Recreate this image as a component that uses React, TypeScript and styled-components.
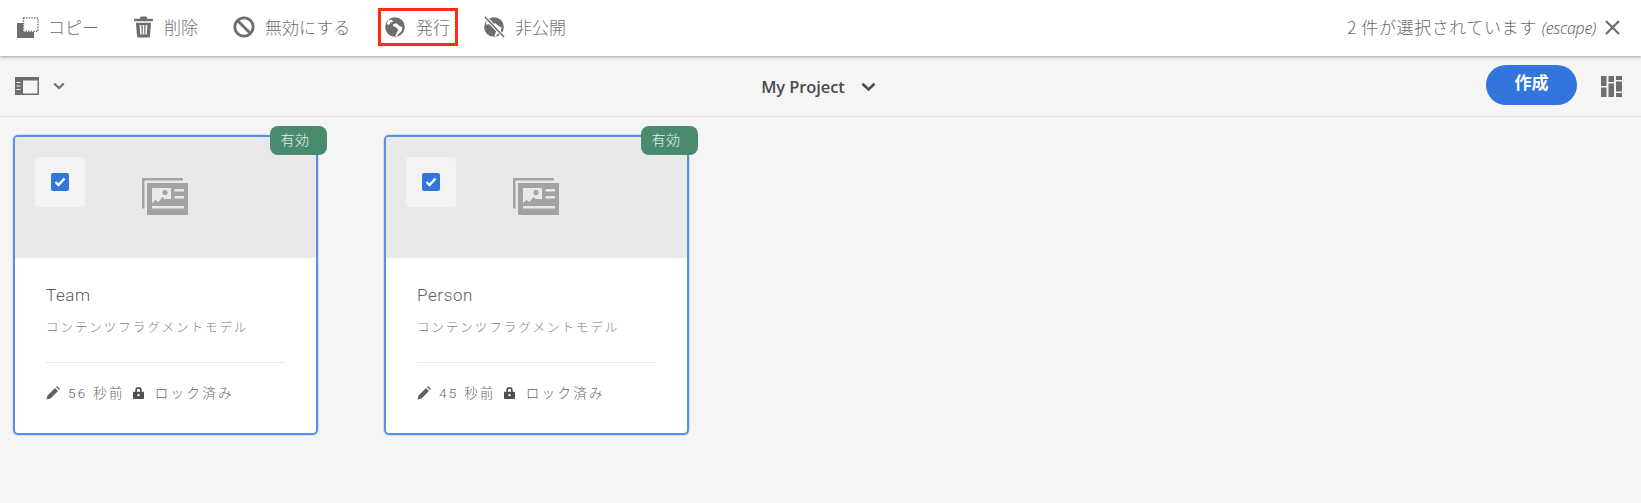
import React from "react";
import styled, { createGlobalStyle } from "styled-components";

const Global = createGlobalStyle`
  html, body { margin: 0; padding: 0; background: #f5f5f5; }
  #root { height: 503px; overflow: hidden; }
  body { font-family: "Noto Sans CJK JP", "Noto Sans", sans-serif; }
`;

const Page = styled.div`
  width: 1641px;
  height: 503px;
  display: flex;
  flex-direction: column;
  background: #f5f5f5;
`;

const ActionBar = styled.header`
  height: 56px;
  flex: none;
  box-sizing: border-box;
  background: #fff;
  box-shadow: 0 1px 3px rgba(0, 0, 0, 0.35);
  display: flex;
  align-items: center;
  justify-content: space-between;
  padding: 0 21px 0 17px;
  position: relative;
`;

const Actions = styled.div`
  display: flex;
  align-items: center;
`;

const Action = styled.div<{ $w: number; $gap: number; $after?: number; $boxed?: boolean }>`
  display: flex;
  align-items: center;
  box-sizing: border-box;
  width: ${(p) => p.$w}px;
  height: 38px;
  gap: ${(p) => p.$gap}px;
  margin-right: ${(p) => p.$after ?? 0}px;
  padding-left: ${(p) => (p.$boxed ? 4 : 0)}px;
  border: ${(p) => (p.$boxed ? "3px solid #ff2a12" : "none")};
  font-size: 17px;
  font-weight: 300;
  color: #707070;
  margin-top: -2px;
  white-space: nowrap;
`;

const ActionLabel = styled.span`
  position: relative;
  top: -1px;
`;

const Status = styled.div`
  display: flex;
  align-items: center;
  gap: 9px;
  font-size: 17px;
  font-weight: 300;
  color: #686868;
  margin-top: -2px;
`;

const StatusText = styled.span`
  position: relative;
  top: -1px;
  letter-spacing: 0.6px;
`;

const Esc = styled.em`
  font-family: "Noto Sans", sans-serif;
  font-size: 16px;
  margin-left: 5px;
  letter-spacing: -0.3px;
`;

const SubBar = styled.div`
  height: 61px;
  flex: none;
  box-sizing: border-box;
  border-bottom: 1px solid #e1e1e1;
  display: grid;
  grid-template-columns: 1fr auto 1fr;
  align-items: center;
  padding: 0 19px 0 15px;
`;

const RailToggle = styled.div`
  display: flex;
  align-items: center;
  gap: 14px;
`;

const Title = styled.div`
  display: flex;
  align-items: center;
  gap: 16px;
  font-family: "Open Sans", sans-serif;
  font-size: 16.5px;
  font-weight: 600;
  letter-spacing: -0.1px;
  color: #4b4b4b;
  padding-top: 1px;
`;

const RightTools = styled.div`
  display: flex;
  align-items: center;
  justify-content: flex-end;
  gap: 24px;
`;

const Create = styled.button`
  width: 91px;
  height: 40px;
  border: none;
  border-radius: 20px;
  background: #3275dd;
  color: #fff;
  font-family: inherit;
  font-size: 17px;
  font-weight: 700;
  padding: 0 0 7px;
  margin-top: -2px;
`;

const Grid = styled.main`
  display: grid;
  grid-template-columns: repeat(2, 305px);
  column-gap: 66px;
  padding: 18px 0 0 13px;
`;

const Card = styled.article`
  position: relative;
  height: 300px;
  box-sizing: border-box;
  border: 2px solid #5790e4;
  border-radius: 5px;
  background: #fff;
  box-shadow: 0 0 0 1px rgba(87, 144, 228, 0.2);
  display: flex;
  flex-direction: column;
`;

const Thumb = styled.div`
  height: 121px;
  flex: none;
  background: #e9e9e9;
  border-radius: 3px 3px 0 0;
  display: flex;
  align-items: center;
  justify-content: center;
  padding: 0 1px 2px 0;
  box-sizing: border-box;
`;

const Badge = styled.span`
  position: absolute;
  top: -11px;
  right: -11px;
  width: 57px;
  height: 29px;
  box-sizing: border-box;
  border-radius: 8px;
  background: #4a8b6f;
  color: #e6f0eb;
  font-size: 14px;
  font-weight: 300;
  letter-spacing: 0.6px;
  display: flex;
  align-items: center;
  justify-content: center;
  padding: 0 7px 3px 0;
`;

const CheckTile = styled.div`
  position: absolute;
  top: 20px;
  left: 20px;
  width: 50px;
  height: 50px;
  border-radius: 4px;
  background: #f3f3f3;
  display: flex;
  align-items: center;
  justify-content: center;
`;

const Check = styled.span`
  width: 18px;
  height: 18px;
  border-radius: 2px;
  background: #3275dd;
  display: flex;
  align-items: center;
  justify-content: center;
`;

const Body = styled.div`
  flex: 1;
  padding: 25px 31px 0 31px;
  display: flex;
  flex-direction: column;
`;

const Name = styled.div`
  font-family: Roboto, sans-serif;
  font-size: 17px;
  font-weight: 300;
  letter-spacing: 0.6px;
  line-height: 24px;
  color: #5e5e5e;
`;

const Sub = styled.div`
  font-size: 12.5px;
  font-weight: 300;
  letter-spacing: 1.95px;
  line-height: 16px;
  color: #7e7e7e;
  margin-top: 12px;
  white-space: nowrap;
`;

const Divider = styled.hr`
  border: none;
  height: 1px;
  background: #e6e6e6;
  margin: 27px 0 0;
`;

const Meta = styled.div`
  display: flex;
  align-items: center;
  margin-top: 21px;
  font-family: Roboto, "Noto Sans CJK JP", sans-serif;
  font-size: 13.5px;
  font-weight: 300;
  letter-spacing: 2.3px;
  line-height: 18px;
  color: #666;
  white-space: nowrap;
`;

const MetaText = styled.span<{ $gap: number }>`
  margin-left: ${(p) => p.$gap}px;
  margin-right: 8px;
`;

const G = "#6e6e6e";

const Svg = styled.svg`
  flex: none;
  display: block;
`;

const CopyIcon = () => (
  <Svg width="22" height="21" viewBox="0 0 22 21">
    <path d="M0 6h6v9h11v6H0z" fill={G} />
    <rect x="6.500" y="0.800" width="14.500" height="13.500" fill="none" stroke={G} strokeWidth="1.300" strokeDasharray="1.500 1.100" />
  </Svg>
);

const TrashIcon = () => (
  <Svg width="19" height="22" viewBox="0 0 20 22">
    <path
      fillRule="evenodd"
      d="M7 0h6l1 2.200h5a1 1 0 0 1 1 1V5H0V3.200a1 1 0 0 1 1-1h5zM2 6.500h16L16.800 21a1.200 1.200 0 0 1-1.200 1H4.400a1.200 1.200 0 0 1-1.200-1zM6 9l.5 10h1.600L7.700 9zm3.200 0v10h1.600V9zm3.100 0-.4 10h1.600l.5-10z"
      fill={G}
    />
  </Svg>
);

const BanIcon = () => (
  <Svg width="22" height="22" viewBox="0 0 22 22">
    <circle cx="11" cy="11" r="9.200" fill="none" stroke={G} strokeWidth="2.800" />
    <path d="M4.500 4.500l13 13" stroke={G} strokeWidth="2.800" />
  </Svg>
);

const GlobeShape = () => (
  <>
    <circle cx="10" cy="10" r="9.800" fill={G} />
    <path d="M3.200 3.200L6.600 2.800 8.200 4.800 5.800 5.600 4.200 7.800 1.600 7.200z" fill="#fff" />
    <path
      d="M7.800 7.200L11.500 6.300 14.200 8.800 17.500 10.300 16.700 14 13.300 17.300 11.600 19.400 10.300 19 11.700 15.600 13.200 12.900 11.400 10.400 8.600 9.600z"
      fill="#fff"
    />
  </>
);

const GlobeIcon = () => (
  <Svg width="20" height="20" viewBox="0 0 20 20">
    <GlobeShape />
  </Svg>
);

const HideIcon = () => (
  <Svg width="22" height="22" viewBox="0 0 22 22">
    <g transform="translate(1 1)">
      <GlobeShape />
    </g>
    <path d="M2 1l19 20" stroke="#fff" strokeWidth="3.600" />
    <path d="M2 1l19 20" stroke={G} strokeWidth="1.600" />
  </Svg>
);

const RailIcon = () => (
  <Svg width="24" height="20" viewBox="0 0 24 20">
    <path fillRule="evenodd" d="M0 1h24v18H0zM8 4.500v13h14.500v-13z" fill={G} />
    <path d="M1.500 6.500h4M1.500 10h4M1.500 13.500h4" stroke="#f5f5f5" strokeWidth="1.100" />
  </Svg>
);

const ChevronIcon = ({ large }: { large?: boolean }) => (
  <Svg width={large ? 15 : 12} height={large ? 10 : 8} viewBox="0 0 12 8">
    <path d="M1.200 1.400L6 6l4.800-4.600" fill="none" stroke={large ? "#4b4b4b" : G} strokeWidth="2.100" />
  </Svg>
);

const CloseIcon = () => (
  <Svg width="15" height="15" viewBox="0 0 15 15">
    <path d="M1 1l13 13M14 1L1 14" stroke={G} strokeWidth="2.200" />
  </Svg>
);

const LayoutIcon = () => (
  <Svg width="21" height="21" viewBox="0 0 21 21" fill={G}>
    <rect x="0" y="0" width="5.500" height="10" />
    <rect x="0" y="11.500" width="5.500" height="9.500" />
    <rect x="7.500" y="0" width="5.500" height="6" />
    <rect x="7.500" y="7.500" width="5.500" height="13.500" />
    <rect x="15" y="0" width="6" height="4" />
    <rect x="15" y="5.500" width="6" height="10" />
    <rect x="15" y="17" width="6" height="4" />
  </Svg>
);

const CheckMark = () => (
  <Svg width="12" height="10" viewBox="0 0 12 10">
    <path d="M1.500 5l3 3L10.500 1.500" fill="none" stroke="#fff" strokeWidth="2.400" />
  </Svg>
);

const ModelIcon = () => (
  <Svg width="46" height="37" viewBox="0 0 46 37">
    <path d="M0 0h41v2.500H2.500v28H0z" fill="#a3a3a3" />
    <path
      fillRule="evenodd"
      d="M5 5h41v32H5zM10 10v15l3.500-3 3 2 4-5 2 2h6.500V10zM32.500 11v2.500H42V11zM32.500 18v2.500H42V18zM10 28v2.500h32V28z"
      fill="#a3a3a3"
    />
    <circle cx="23" cy="14.500" r="2.600" fill="#a3a3a3" />
  </Svg>
);

const PencilIcon = () => (
  <Svg width="14" height="14" viewBox="0 0 14 14">
    <path d="M0.500 13.500l1-4 7.500-7.500 3 3-7.500 7.500zM10 1l1-1 3 3-1 1z" fill="#5f5f5f" />
  </Svg>
);

const LockIcon = () => (
  <Svg width="11" height="12" viewBox="0 0 12 13">
    <path
      fillRule="evenodd"
      d="M2.500 5V3.500a3.500 3.500 0 0 1 7 0V5H11a1 1 0 0 1 1 1v6a1 1 0 0 1-1 1H1a1 1 0 0 1-1-1V6a1 1 0 0 1 1-1zM4.300 5h3.400V3.500a1.700 1.700 0 0 0-3.400 0zM6 7.500a1.300 1.300 0 1 0 0 2.600 1.300 1.300 0 0 0 0-2.600z"
      fill="#4f4f4f"
    />
  </Svg>
);

const cards = [
  { name: "Team", age: "56 秒前" },
  { name: "Person", age: "45 秒前" },
];

export default function App() {
  return (
    <Page>
      <Global />
      <ActionBar>
        <Actions>
          <Action $w={117} $gap={9}><CopyIcon /><ActionLabel>コピー</ActionLabel></Action>
          <Action $w={99} $gap={11}><TrashIcon /><ActionLabel>削除</ActionLabel></Action>
          <Action $w={145} $gap={10}><BanIcon /><ActionLabel>無効にする</ActionLabel></Action>
          <Action $w={80} $gap={11} $after={25} $boxed><GlobeIcon /><ActionLabel>発行</ActionLabel></Action>
          <Action $w={100} $gap={10}><HideIcon /><ActionLabel>非公開</ActionLabel></Action>
        </Actions>
        <Status>
          <StatusText>2 件が選択されています<Esc>(escape)</Esc></StatusText>
          <CloseIcon />
        </Status>
      </ActionBar>
      <SubBar>
        <RailToggle><RailIcon /><ChevronIcon /></RailToggle>
        <Title>My Project<ChevronIcon large /></Title>
        <RightTools><Create>作成</Create><LayoutIcon /></RightTools>
      </SubBar>
      <Grid>
        {cards.map((c) => (
          <Card key={c.name}>
            <Thumb><ModelIcon /></Thumb>
            <CheckTile><Check><CheckMark /></Check></CheckTile>
            <Badge>有効</Badge>
            <Body>
              <Name>{c.name}</Name>
              <Sub>コンテンツフラグメントモデル</Sub>
              <Divider />
              <Meta>
                <PencilIcon />
                <MetaText $gap={8}>{c.age}</MetaText>
                <LockIcon />
                <MetaText $gap={11}>ロック済み</MetaText>
              </Meta>
            </Body>
          </Card>
        ))}
      </Grid>
    </Page>
  );
}
